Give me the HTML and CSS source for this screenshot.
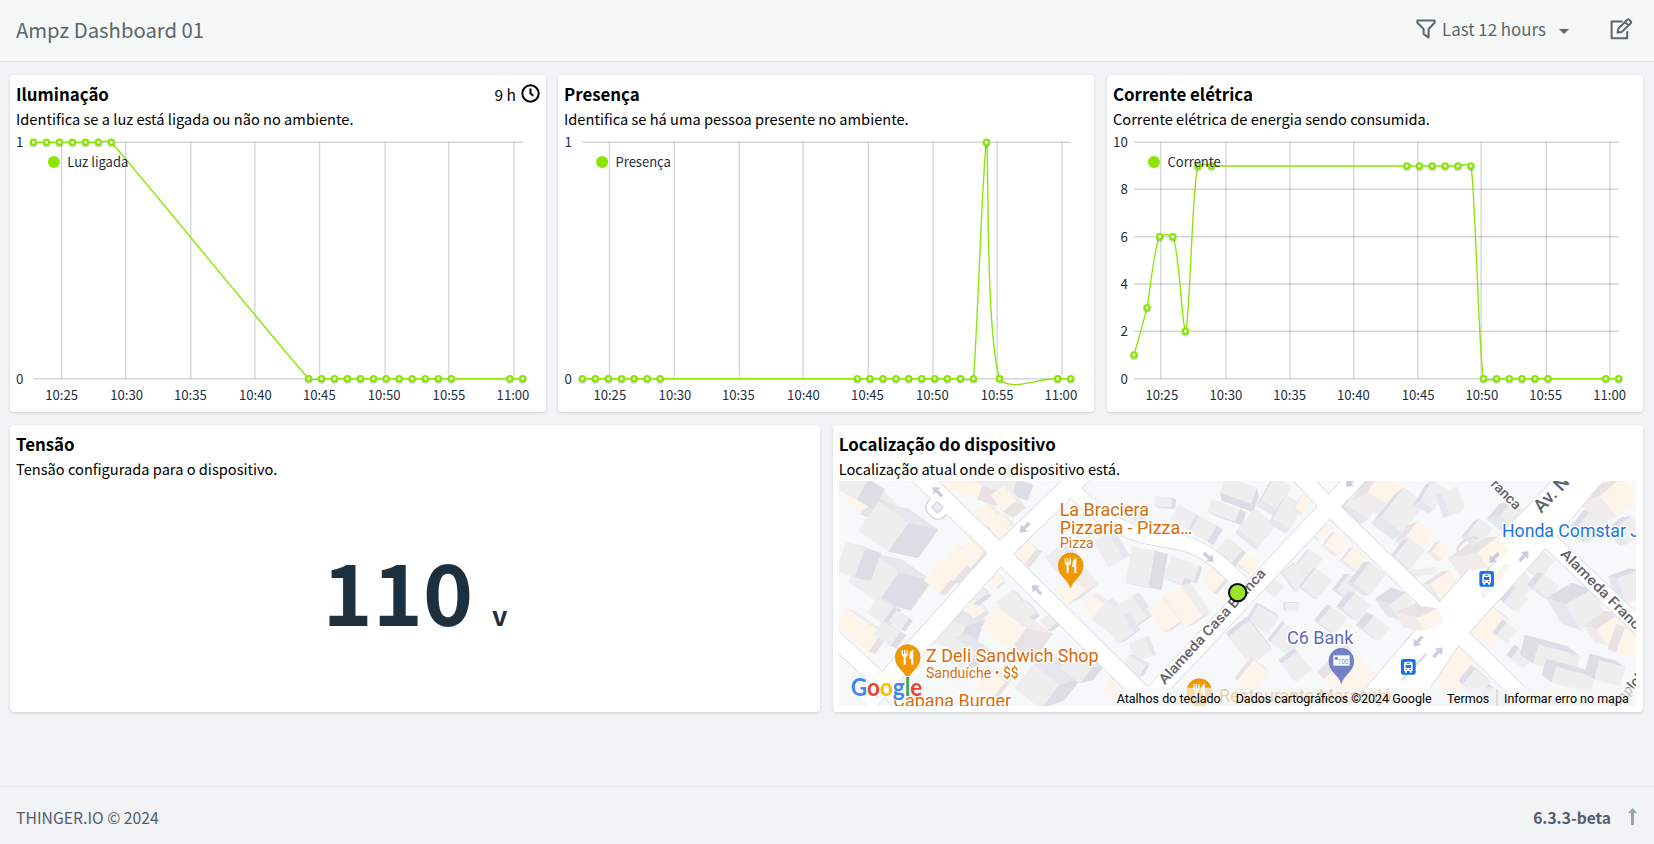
FILE: index.html
```html
<!DOCTYPE html>
<html lang="pt">
<head>
<meta charset="utf-8">
<title>Ampz Dashboard 01</title>
<link rel="stylesheet" href="styles.css">
</head>
<body>
<header class="topbar">
  <h1 class="topbar-title">Ampz Dashboard 01</h1>
  <div class="topbar-actions">
    <svg class="icon-filter" width="20" height="21" viewBox="0 0 20 21"><path d="M1.4 1.6h17.2v2.2L12.6 10v8.6L7.6 15v-5L1.4 3.8z"/></svg>
    <span class="range">Last 12 hours</span>
    <i class="caret"></i>
    <svg class="icon-edit" width="23" height="22" viewBox="0 0 23 22"><path d="M12.5 3.6H1.6v16.6h15.6v-7"/><path d="M7.6 14.6l.7-4L17.2 1.700q1-.9 2 0l1.500 1.500q.9 1 0 2L11.800 13.900zM15 4l3.600 3.600"/></svg>
  </div>
</header>
<main class="board">
  <div class="row row-three">
    <section class="card">
      <div class="card-head"><h2>Iluminação</h2><span class="age">9 h <svg width="19" height="19" viewBox="0 0 19 19"><circle cx="9.500" cy="9.500" r="8.200"/><path d="M9.500 4.600v5l2.800 2"/></svg></span></div>
      <p class="desc">Identifica se a luz está ligada ou não no ambiente.</p>
      <svg class="chart" id="chart-luz" viewBox="16 134 524 272"></svg>
    </section>
    <section class="card">
      <div class="card-head"><h2>Presença</h2></div>
      <p class="desc">Identifica se há uma pessoa presente no ambiente.</p>
      <svg class="chart" id="chart-presenca" viewBox="564 134 524 272"></svg>
    </section>
    <section class="card">
      <div class="card-head"><h2>Corrente elétrica</h2></div>
      <p class="desc">Corrente elétrica de energia sendo consumida.</p>
      <svg class="chart" id="chart-corrente" viewBox="1113 134 524 272"></svg>
    </section>
  </div>
  <div class="row row-two">
    <section class="card">
      <div class="card-head"><h2>Tensão</h2></div>
      <p class="desc">Tensão configurada para o dispositivo.</p>
      <div class="reading"><span class="value">110</span><span class="unit">v</span></div>
    </section>
    <section class="card">
      <div class="card-head"><h2>Localização do dispositivo</h2></div>
      <p class="desc">Localização atual onde o dispositivo está.</p>
      <svg class="map" id="map" viewBox="27 183 2391 675"></svg>
    </section>
  </div>
</main>
<footer class="footer">
  <span class="copyright">THINGER.IO © 2024</span>
  <span class="version">6.3.3-beta <svg width="9" height="17" viewBox="0 0 9 17"><path d="M4.500 0L9 5H6v12H3V5H0z"/></svg></span>
</footer>
<script src="app.js"></script>
</body>
</html>
```
FILE: styles.css
```css
* { box-sizing: border-box; }
body {
  margin: 0;
  height: 844px;
  display: flex;
  flex-direction: column;
  background: #f1f3f5;
  font-family: "Noto Sans CJK SC", "Open Sans", sans-serif;
  color: #000;
  overflow: hidden;
}
h1, h2, p { margin: 0; }
.topbar {
  height: 62px;
  padding: 0 21px 3px 16px;
  display: flex;
  align-items: center;
  justify-content: space-between;
  background: #f6f8f8;
  border-bottom: 1px solid #dee2e6;
  color: #58666e;
}
.topbar-title { font-size: 20.3px; font-weight: 400; line-height: 30px; }
.topbar-actions { display: flex; align-items: center; }
.topbar-actions svg { fill: none; stroke: #58666e; stroke-width: 2; stroke-linejoin: round; }
.range { font-size: 16.900px; line-height: 24px; margin-left: 6px; }
.caret {
  margin: 4px 41px 0 13px;
  border: 5px solid transparent;
  border-top-color: #58666e;
  border-bottom: 0;
}
.board { flex: 1; padding: 13px 11px 0 10px; display: flex; flex-direction: column; gap: 13px; }
.row { display: grid; gap: 12.5px; }
.row-three { grid-template-columns: 536px 536px 536px; gap: 12.500px; height: 337px; }
.row-two { grid-template-columns: repeat(2, 1fr); height: 287px; }
.row-three .card:nth-child(2) { margin-left: -.5px; margin-right: .5px; }
.card {
  min-width: 0;
  padding: 5px 6px 0;
  background: #fff;
  border-radius: 4px;
  box-shadow: 0 1px 3px rgba(0, 0, 0, .15);
  display: flex;
  flex-direction: column;
}
.card-head { display: flex; justify-content: space-between; align-items: center; height: 28px; padding-bottom: 1px; }
.card-head h2 { font-size: 16.850px; font-weight: 700; line-height: 26px; }
.age { display: flex; align-items: center; gap: 5px; font-size: 15.500px; line-height: 26px; }
.age svg { fill: none; stroke: #000; stroke-width: 2; }
.desc { font-size: 14.640px; line-height: 22px; height: 23px; white-space: nowrap; }
.chart { display: block; width: 524px; height: 272px; margin-top: 3px; overflow: visible; }
.chart text { font-size: 13.3px; fill: #1d2f3d; }
.reading {
  flex: 1;
  display: flex;
  justify-content: center;
  align-items: baseline;
  padding-top: 43px;
  color: #1e303e;
  font-weight: 700;
  line-height: 130px;
}
.value { font-size: 85px; }
.unit { font-size: 27px; margin-left: 19px; }
.map { display: block; width: 797px; height: 225px; margin: 0; }
.map text { font-family: Roboto, sans-serif; }
.poi { fill: #d56e0c; }
.halo { stroke: #fff; stroke-width: 9px; stroke-linejoin: round; paint-order: stroke; }
.street { fill: #5f6368; font-weight: 500; }
.map .google { font-family: Lato, sans-serif; font-weight: 700; }
.legal { font-size: 36px; fill: #000; }
.footer {
  height: 58px;
  padding: 2px 17px 0 16px;
  border-top: 1px solid #e4e6ea;
  display: flex;
  align-items: center;
  justify-content: space-between;
  font-size: 15.750px;
  color: #515d6e;
}
.copyright { padding-top: 2px; }
.version { display: flex; align-items: center; gap: 17px; font-size: 15.600px; font-weight: 700; }
.version svg { fill: #98a6ad; }
```
FILE: app.js
```js
const GREEN = '#8ae600';
const text = (x, y, s, w, extra = '') =>
  `<text x="${x}" y="${y}" ${w ? `textLength="${w}" lengthAdjust="spacingAndGlyphs"` : ''} ${extra}>${s}</text>`;

function chart(id, c) {
  let out = '';
  c.rows.forEach(([y, label]) => {
    out += `<path d="M${c.x0} ${y}H${c.x1}" stroke="rgba(30,48,70,.2)" stroke-width="1.4"/>`;
    out += text(c.labelX, y + 4.8, label, 0, 'text-anchor="end"');
  });
  c.cols.forEach((x, i) => {
    out += `<path d="M${x} 142.300V378.700" stroke="rgba(30,48,60,.19)" stroke-width="1.4"/>`;
    out += `<text x="${c.labels[i]}" y="400" text-anchor="middle" textLength="32.800" lengthAdjust="spacingAndGlyphs">${['10:25', '10:30', '10:35', '10:40', '10:45', '10:50', '10:55', '11:00'][i]}</text>`;
  });
  out += `<path d="${c.line}" fill="none" stroke="${GREEN}" stroke-width="1.350"/>`;
  c.points.forEach(([x, y]) => {
    out += `<circle cx="${x}" cy="${y + 1.200}" r="3.900" fill="rgba(0,0,0,.16)"/><circle cx="${x}" cy="${y}" r="2.600" fill="#fff" stroke="${GREEN}" stroke-width="2.300"/>`;
  });
  out += `<circle cx="${c.key[0]}" cy="162" r="6" fill="${GREEN}"/>` + text(c.key[0] + 13.400, 167, c.key[1], c.key[2]);
  document.getElementById(id).innerHTML = out;
}

const at = (xs, y) => xs.map(x => [x, y]);
chart('chart-luz', {
  x0: 33.4, x1: 522.8, labelX: 23.4, rows: [[142.3, '1'], [378.7, '0']],
  cols: [61.6, 125.7, 190.8, 254.9, 319.6, 385.1, 448.8, 514],
  labels: [61.6, 126.6, 190.4, 255.4, 319.3, 384.2, 449, 513],
  line: 'M33.400 142.300H98.400C102 142 107 139.500 111.400 142.300C120 151 296 366 308.700 378.700C313 380.500 317 379.500 321.500 378.700H522.800',
  points: [...at([33.4, 46.5, 59.5, 72.5, 85.5, 98.4, 111.4], 142.3), ...at([308.7, 321.5, 334.5, 347.5, 360.5, 373.5, 386.2, 399.2, 412.2, 425.3, 438.3, 451.3, 509.8, 522.8], 378.7)],
  key: [53.9, 'Luz ligada', 61]
});
chart('chart-presenca', {
  x0: 582.4, x1: 1070.7, labelX: 572, rows: [[142.3, '1'], [378.7, '0']],
  cols: [609.5, 674.3, 739.4, 803.1, 868.2, 933, 997.1, 1061.9],
  labels: [609.8, 675, 738.3, 803.5, 867.5, 932.3, 997.1, 1060.8],
  line: 'M582.400 378.700H960.500C965 379 969 381.500 973.500 378.700C977 340 983 155 986.500 142.300C989 142 985 330 999.600 378.700C1007 390 1031 382 1046 379.500Q1052 378.600 1057.600 378.700H1070.700',
  points: [...at([582.4, 595.4, 608.4, 621.5, 634.1, 647.2, 660.2, 857.3, 870, 883, 896, 908.7, 921.7, 934.8, 947.4, 960.5, 973.5, 999.6, 1057.6, 1070.7], 378.7), [986.5, 142.3]],
  key: [602.1, 'Presença', 55.4]
});
chart('chart-corrente', {
  x0: 1134, x1: 1618.8, labelX: 1127.8, rows: [[142.3, '10'], [189.3, '8'], [236.7, '6'], [284, '4'], [331.3, '2'], [378.7, '0']],
  cols: [1160.8, 1225.9, 1290, 1353.7, 1417.8, 1481.1, 1546.3, 1610],
  labels: [1161.8, 1225.9, 1289.6, 1353.4, 1418.1, 1481.8, 1545.6, 1609.6],
  line: 'M1134 355C1138 341 1143 323 1147.100 307.700C1150 290 1155 243 1159.700 236.700Q1166 232.500 1172.800 236.700C1179 247 1182 326 1185.400 331.300C1190 326 1192 180 1198.100 166Q1204 163 1211.500 166H1457.900C1462 165.500 1467 162.500 1470.900 166C1475 182 1479 363 1483.600 378.700Q1489 381.500 1496.600 378.700H1618.800',
  points: [[1134, 355], [1147.1, 307.7], [1159.7, 236.7], [1172.8, 236.7], [1185.4, 331.3], ...at([1198.1, 1211.5, 1406.9, 1419.5, 1432.2, 1445.2, 1457.9, 1470.9], 166), ...at([1483.6, 1496.6, 1509.3, 1522, 1535, 1548, 1605.8, 1618.8], 378.7)],
  key: [1154, 'Corrente', 53.4]
});

/* Map: ground, buildings, roads, then labels and markers. */
const roofs = { g: '#eeeeef', o: '#fdf4ea' };
// type, centre x, centre y, width, height, angle, extrusion x, extrusion y
const buildings = [
  ['o', 95, 230, 75, 70, -40, 60, 30], ['g', 160, 320, 110, 105, 35, 90, 20], ['g', 50, 180, 110, 70, 30, 50, 30],
  ['g', 130, 470, 110, 110, 35, 100, 25], ['g', 60, 420, 60, 90, 20, 50, 10], ['o', 60, 610, 70, 60, 35, 25, 6],
  ['o', 110, 650, 60, 70, 35, 22, 6], ['g', 150, 570, 55, 60, 35, 25, 8], ['g', 205, 600, 45, 40, 35, 14, 5],
  ['g', 170, 640, 60, 50, 35, 20, 8], ['o', 395, 190, 120, 60, 20, 60, 20], ['g', 500, 185, 110, 50, 20, 50, 14],
  ['o', 470, 285, 50, 60, -38, 22, 14], ['o', 510, 320, 55, 65, -38, 24, 14], ['o', 520, 235, 50, 60, -38, 30, 20],
  ['o', 330, 470, 60, 80, 40, 18, 8], ['o', 375, 430, 60, 90, 40, 18, 8], ['o', 425, 395, 60, 80, 40, 20, 8],
  ['o', 575, 390, 65, 60, 38, 18, 8], ['g', 350, 640, 90, 80, 20, 60, -20], ['g', 390, 700, 80, 60, 35, 40, -10],
  ['o', 430, 560, 40, 60, -35, 16, 6], ['o', 500, 480, 30, 30, -35, 8, 4], ['g', 540, 550, 60, 55, -38, 18, 8],
  ['g', 580, 575, 50, 50, -38, 16, 8], ['g', 440, 525, 50, 30, -38, 16, 6], ['o', 520, 625, 110, 80, 36, 80, 16],
  ['g', 655, 605, 35, 35, -38, 12, 6], ['g', 620, 800, 100, 90, 38, 70, -24], ['g', 740, 745, 70, 60, 38, 40, -10],
  ['o', 480, 795, 60, 70, 38, 20, -6], ['o', 720, 510, 70, 60, -38, 40, -20], ['g', 690, 420, 70, 60, 50, 28, 0],
  ['g', 835, 390, 90, 50, 60, 20, -10], ['g', 930, 440, 70, 110, 10, 40, 10], ['g', 1040, 450, 60, 70, 20, 20, 10],
  ['g', 1085, 455, 30, 50, 20, 10, 6], ['o', 790, 560, 50, 50, 38, 16, -6], ['g', 830, 590, 60, 70, 38, 20, -8],
  ['g', 900, 580, 70, 80, -35, 22, -10], ['g', 870, 630, 60, 60, -35, 20, -8], ['o', 1000, 585, 60, 90, -35, 26, -10],
  ['o', 1060, 560, 60, 110, -35, 26, -10], ['g', 930, 690, 50, 60, -20, 14, -6], ['g', 910, 740, 60, 40, 30, 14, -6],
  ['o', 850, 810, 50, 50, 30, 10, -6], ['g', 1000, 245, 50, 30, 5, 12, 6], ['g', 910, 280, 50, 40, 30, 12, 6],
  ['g', 1060, 290, 60, 50, 30, 16, 10], ['g', 1120, 325, 60, 55, 30, 18, 12], ['g', 1180, 270, 90, 40, 20, 20, 12],
  ['g', 1225, 210, 100, 50, 20, 6, 26], ['g', 1190, 400, 60, 70, 40, 14, 6], ['o', 1150, 480, 50, 60, 40, 10, 4],
  ['g', 1280, 320, 80, 80, 40, -8, 14], ['g', 1340, 220, 60, 80, 30, -16, 18], ['g', 1375, 275, 60, 80, 30, -14, 16],
  ['o', 1420, 250, 30, 50, 30, -8, 8], ['o', 1255, 430, 50, 40, 40, -6, 4], ['o', 1470, 325, 45, 50, 38, -12, 4],
  ['o', 1520, 370, 50, 50, 38, -12, 4], ['o', 1575, 415, 50, 50, 38, -12, 4], ['g', 1440, 425, 50, 60, 38, -8, 4],
  ['g', 1400, 470, 50, 70, -38, -8, 2], ['g', 1460, 490, 60, 70, 38, -10, 2], ['g', 1330, 500, 50, 40, 38, -5, 0],
  ['g', 1385, 562, 40, 24, 0, -4, -4], ['g', 1300, 600, 70, 60, 30, -6, -10], ['g', 1260, 670, 80, 110, -38, -6, -14],
  ['g', 1370, 660, 70, 70, 38, -8, -8], ['g', 1400, 740, 60, 70, -38, -10, -10], ['g', 1560, 500, 50, 60, 38, -16, 0],
  ['g', 1620, 475, 60, 80, 38, -20, 2], ['g', 1580, 560, 60, 60, 38, -20, -4], ['g', 1510, 600, 60, 60, 38, -16, -4],
  ['g', 1640, 625, 60, 50, 38, -24, -10], ['g', 1720, 560, 60, 60, -35, -44, -16], ['o', 1790, 595, 70, 50, -25, -50, -10],
  ['o', 1270, 770, 60, 80, 38, -8, -10], ['o', 1560, 770, 120, 100, -45, -20, -20], ['g', 1600, 245, 80, 70, 30, -36, 24],
  ['o', 1670, 210, 90, 70, 30, -46, 24], ['g', 1720, 270, 80, 110, 38, -30, 22], ['g', 1810, 225, 50, 70, 30, -20, 12],
  ['g', 1870, 240, 50, 70, -20, -18, 12], ['o', 1770, 345, 60, 60, 38, -34, 14], ['g', 1740, 400, 60, 70, 38, -20, 6],
  ['o', 1835, 390, 40, 40, 38, -16, 6], ['g', 1780, 455, 80, 20, -8, -8, 2], ['o', 1850, 500, 70, 70, -35, -24, 2],
  ['o', 1975, 405, 100, 70, -35, -60, 10], ['g', 1950, 335, 50, 60, 38, -18, 8], ['g', 2060, 290, 80, 60, 40, -40, 10],
  ['g', 2130, 430, 60, 70, 38, -14, -4], ['g', 2080, 490, 50, 60, -38, -20, -4], ['g', 2060, 540, 50, 50, 38, -16, -6],
  ['g', 2150, 500, 60, 50, 38, -20, -6], ['g', 2270, 570, 90, 90, -30, -60, -20], ['g', 2290, 310, 60, 80, 38, -30, 10],
  ['o', 2370, 230, 90, 80, -40, -60, 20], ['g', 2400, 330, 60, 60, -40, -30, 4], ['g', 2410, 500, 70, 80, -20, -30, -6],
  ['o', 2350, 630, 80, 60, -35, -40, -10], ['o', 1980, 620, 80, 100, 38, -12, -14], ['g', 2030, 640, 40, 50, 38, -12, -10],
  ['o', 1880, 750, 100, 130, 38, -16, -20], ['g', 2075, 715, 50, 40, 38, -14, -10], ['g', 2180, 720, 130, 60, 15, -40, -30],
  ['g', 2230, 780, 120, 50, 15, -30, -24], ['o', 2400, 670, 60, 80, 20, -26, -10], ['g', 2340, 760, 80, 60, 15, -30, -20],
  ['g', 1940, 790, 60, 60, 38, -12, -14], ['g', 2000, 840, 60, 40, 38, -12, -14]
];
function building([t, cx, cy, w, h, a, dx, dy]) {
  const r = a * Math.PI / 180, c = Math.cos(r), s = Math.sin(r);
  const p = [[-w, -h], [w, -h], [w, h], [-w, h]].map(([x, y]) => [cx + (x * c - y * s) / 2, cy + (x * s + y * c) / 2]);
  let d = '';
  p.forEach((q, i) => {
    const n = p[(i + 1) % 4];
    const side = (n[1] - q[1]) * dx - (n[0] - q[0]) * dy;
    if (side > 0) d += `<path d="M${q}L${n}L${n[0] + dx} ${n[1] + dy}L${q[0] + dx} ${q[1] + dy}z" fill="${(n[0] - q[0]) * dx > 0 ? (t === 'o' ? '#f1ecec' : '#e6e7ec') : (t === 'o' ? '#e8e2e4' : '#dcdde5')}"/>`;
  });
  return d + `<path d="M${p.join('L')}z" fill="${roofs[t]}"/>`;
}

const roads = [
  ['M200 100L510 400L965 850', 46], ['M110 850L510 400L790 130', 50], ['M-10 635L170 800L230 870', 42],
  ['M735 215C830 310 900 345 1000 358C1120 372 1160 420 1235 490', 38], ['M925 870L1236 540L1600 150', 46],
  ['M1385 140L1492 255L1850 600', 42], ['M1880 635L2130 880', 42], ['M2140 345L2450 640', 42]
];
const avenue = 'M1560 860L1830 545L2010 345L2180 170H2330L2160 370L1915 640L1890 670L1760 860z';
let m = '<rect x="27" y="183" width="2391" height="675" fill="#f7f8fa"/>';
m += buildings.map(building).join('');
roads.forEach(([d, w]) => { m += `<path d="${d}" fill="none" stroke="#dcdee4" stroke-width="${w + 11}"/>`; });
m += `<path d="${avenue}" fill="#fff" stroke="#dcdee4" stroke-width="5"/>`;
m += '<rect x="290" y="228" width="66" height="66" rx="26" transform="rotate(42 322 262)" fill="#fff" stroke="#d9dbe2" stroke-width="5"/>';
roads.forEach(([d, w]) => { m += `<path d="${d}" fill="none" stroke="#fff" stroke-width="${w + 6}"/>`; });
m += `<path d="${avenue}" fill="#fff"/>`;
m += '<rect x="310" y="250" width="24" height="24" rx="4" transform="rotate(42 322 262)" fill="#eee" stroke="#d9dbe2" stroke-width="5"/>';
m += '<path d="M1890 400q-20 -10 10 -35q20 -20 45 -8M1955 470l50 -60M1715 780l75 -80" fill="none" stroke="#dedfe3" stroke-width="7"/>';

// Building that reaches over the avenue kerb
m += building(['o', 1990, 395, 80, 55, -38, -50, 12]);
m += building(['o', 2000, 480, 12, 120, 38, -6, 3]) + building(['o', 1803, 600, 65, 45, -25, -40, -8]);

const arrow = (x, y, a) => `<path transform="translate(${x} ${y}) rotate(${a})" d="M-20 -5H2V-15L20 0L2 15V5H-20z" fill="#c9cddd"/>`;
m += arrow(322, 215, 225) + arrow(584, 323, 135) + arrow(620, 509, 225) + arrow(1136, 412, 42) + arrow(1562, 186, 135) + arrow(1992, 414, 133) + arrow(2082, 408, -47) + arrow(1764, 664, 133) + arrow(1824, 697, -47);

const pin = (x, y, fill, edge) => `<path d="M${x} ${y + 68}C${x - 5} ${y + 44} ${x - 37} ${y + 34} ${x - 37} ${y}A37 37 0 0 1 ${x + 37} ${y}C${x + 37} ${y + 34} ${x + 5} ${y + 44} ${x} ${y + 68}z" fill="${fill}" stroke="${edge}" stroke-width="2"/>`;
const food = (x, y) => pin(x, y, '#f29900', '#e08600') + `<path transform="translate(${x} ${y})" d="M-18 -21v11q0 9 6 9v24h6v-24q7 0 7 -9v-11h-4v12h-4v-12h-4v12h-3v-12zM17 -22q-12 2 -12 22v5h6v18h6z" fill="#fff"/>`;
m += food(722, 436) + food(233, 711) + food(1108, 813);
m += pin(1534, 722, '#7381c8', '#5c6bc0') + '<rect x="1510" y="706" width="49" height="31" fill="#fff"/><circle cx="1519" cy="715" r="5" fill="#7381c8"/>' + text(1524, 733, '100', 31, 'font-size="21" fill="#7381c8"');
const bus = (x, y) => `<rect x="${x - 22}" y="${y - 24}" width="44" height="47" rx="6" fill="#1a73e8"/><path transform="translate(${x} ${y})" fill-rule="evenodd" d="M-13 -10q0 -6 6 -6H7q6 0 6 6v22h-3v5h-6v-5h-8v5h-6v-5h-3zM-8 -6v9H8v-9zM-8 6v3h4v-3zM4 6v3h4v-3zM-5 -13v3h10v-3z" fill="#fff"/>`;
m += bus(1970, 477) + bus(1735, 741);

m += text(689, 289, 'La Braciera', 268, 'font-size="53" class="poi halo"');
m += text(689, 343, 'Pizzaria - Pizza…', 398, 'font-size="53" class="poi halo"');
m += text(690, 384, 'Pizza', 101, 'font-size="42" class="poi halo"');
m += text(288, 726, 'Z Deli Sandwich Shop', 518, 'font-size="53" class="poi halo"');
m += text(288, 774, 'Sanduíche • $$', 278, 'font-size="42" class="poi halo"');
m += text(190, 862, 'Cabana Burger', 353, 'font-size="53" class="poi halo"');
m += text(1168, 845, 'Restaurante Maracujá', 517, 'font-size="53" class="poi halo"');
m += text(1371, 671, 'C6 Bank', 199, 'font-size="53" fill="#5c6bc0" class="halo"');
m += text(2016, 350, 'Honda Comstar J', 414, 'font-size="53" fill="#1a73e8" class="halo"');
const street = (x, y, a, s, w, size) => `<g transform="translate(${x} ${y}) rotate(${a})">${text(0, 0, s, w, `font-size="${size}" class="street halo"`)}</g>`;
m += street(1004, 795, -47.5, 'Alameda Casa Branca', 452, 42);
m += street(2189, 404, 45, 'Alameda Franca', 346, 42);
m += street(1980, 195, 45, 'ranca', 108, 42);
m += street(2134, 281, -47, 'Av. Nove', 215, 56);
m += street(2338, 895, -49, 'Camplobasso', 260, 42);
m += '<circle cx="1223" cy="518" r="26" fill="#98e62a" stroke="#000" stroke-width="6"/>';

m += '<rect x="845" y="803" width="1573" height="55" fill="#f5f5f5" opacity=".72"/>';
m += text(860, 848, 'Atalhos do teclado', 312, 'class="legal"') + text(1217, 848, 'Dados cartográficos ©2024 Google', 588, 'class="legal"');
m += text(1851, 848, 'Termos', 127, 'class="legal"') + text(2022, 848, 'Informar erro no mapa', 374, 'class="legal"');
m += '<path d="M2001 808V858" stroke="#d2d3d8" stroke-width="4"/>';
m += '<text class="google" x="62" y="828" font-size="74" textLength="215" lengthAdjust="spacingAndGlyphs" stroke="#fff" stroke-width="5" paint-order="stroke"><tspan fill="#4285f4">G</tspan><tspan fill="#ea4335">o</tspan><tspan fill="#fbbc04">o</tspan><tspan fill="#4285f4">g</tspan><tspan fill="#34a853">l</tspan><tspan fill="#ea4335">e</tspan></text>';
document.getElementById('map').innerHTML = m;
```
